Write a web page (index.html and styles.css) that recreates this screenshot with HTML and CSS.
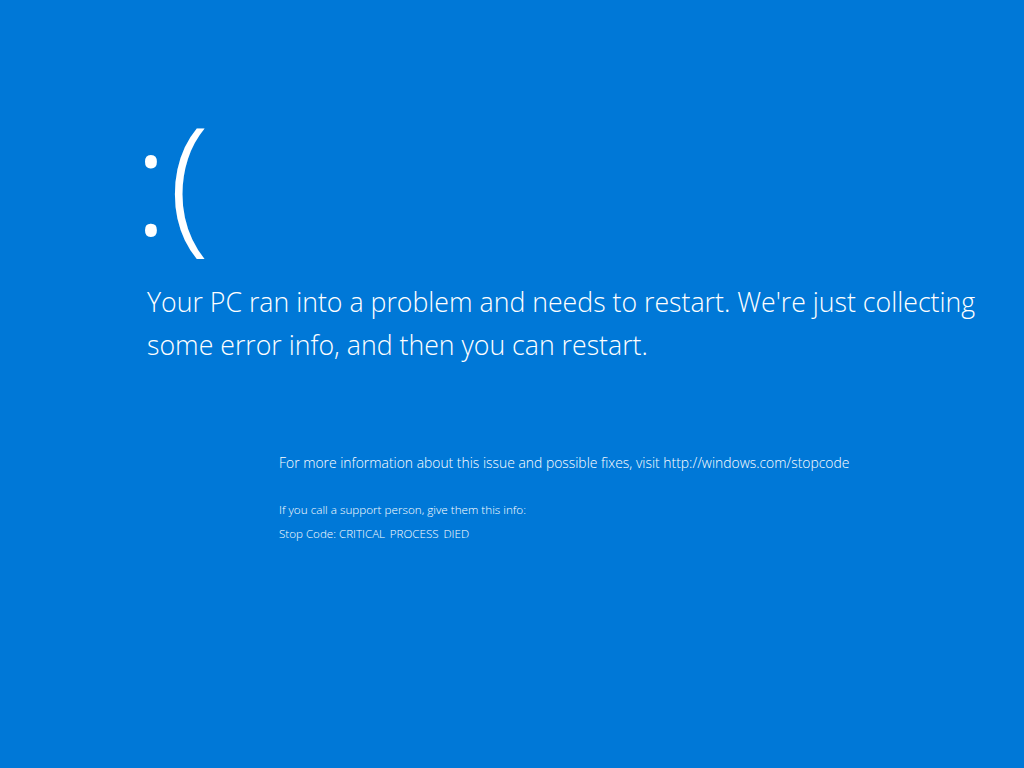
FILE: index.html
```html
<!DOCTYPE html>
<html lang="en">
<head>
<meta charset="utf-8">
<title>Your PC ran into a problem</title>
<link rel="stylesheet" href="styles.css">
</head>
<body>
<main class="bsod">
  <div class="face">:(</div>
  <p class="message">Your PC ran into a problem and needs to restart. We're just collecting<br>some error info, and then you can restart.</p>
  <div class="details">
    <p class="info">For more information about this issue and possible fixes, visit http://windows.com/stopcode</p>
    <p class="support">If you call a support person, give them this info:</p>
    <p class="code">Stop Code: CRITICAL<span class="us">_</span>PROCESS<span class="us">_</span>DIED</p>
  </div>
</main>
</body>
</html>
```
FILE: styles.css
```css
html, body {
  margin: 0;
  height: 100%;
  background: #0078d7;
}
body {
  color: #ffffff;
  font-family: "Open Sans", "Noto Sans", sans-serif;
  font-weight: 300;
}
.bsod {
  padding: 87px 0 0 140px;
}
.face {
  font-size: 150px;
  line-height: 180px;
  font-weight: 300;
  margin: 0 0 0 -7px;
}
.message {
  margin: 13px 0 0 0;
  padding-left: 7px;
  font-size: 26.7px;
  line-height: 43px;
}
.details {
  padding: 86px 0 0 139px;
}
.details p {
  margin: 0;
}
.info {
  font-size: 13.9px;
  line-height: 22px;
}
.support {
  margin-top: 24px !important;
  font-size: 11.7px;
  line-height: 22px;
}
.code {
  margin-top: 3px !important;
  font-size: 11.6px;
  line-height: 22px;
}
.us {
  display: inline-block;
  height: 14px;
  overflow: hidden;
  vertical-align: top;
  margin-top: 3px;
}
```
